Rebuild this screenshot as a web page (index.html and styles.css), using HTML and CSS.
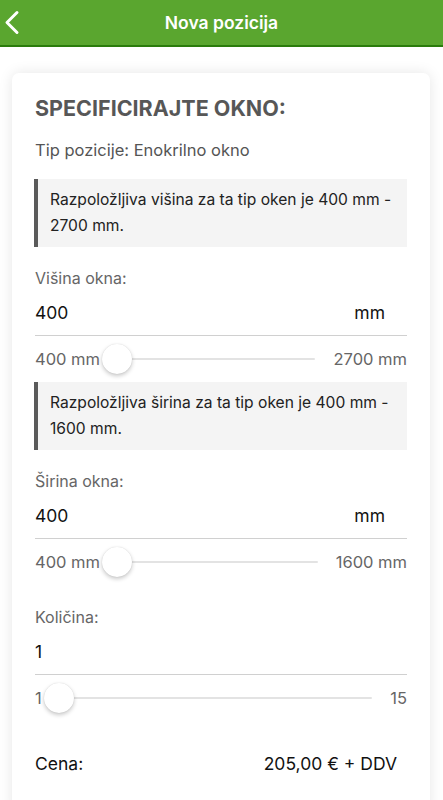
FILE: index.html
```html
<!DOCTYPE html>
<html lang="sl">
<head>
  <meta charset="UTF-8" />
  <title>Nova pozicija</title>
  <meta name="viewport" content="width=device-width, initial-scale=1.0" />
  <link rel="stylesheet" href="styles.css">
</head>
<body>
  <header class="topbar">
    <a class="back" href="#">
      <svg width="24" height="45" viewBox="0 0 24 45">
        <polyline points="17,12.5 7,22.5 17,32.5" fill="none" stroke="#fff" stroke-width="3" stroke-linecap="round" stroke-linejoin="round" />
      </svg>
    </a>
    <h1 class="title">Nova pozicija</h1>
  </header>

  <div class="card">
    <h2 class="card-title">SPECIFICIRAJTE OKNO:</h2>
    <p class="type">Tip pozicije: Enokrilno okno</p>

    <div class="note">Razpoložljiva višina za ta tip oken je 400 mm - 2700 mm.</div>

    <div class="field-label">Višina okna:</div>
    <div class="value-row">
      <span class="value">400</span>
      <span class="unit">mm</span>
    </div>
    <div class="slider-row">
      <span class="range-min">400 mm</span>
      <div class="slider"><div class="track"></div><div class="thumb" style="left: 0%"></div></div>
      <span class="range-max">2700 mm</span>
    </div>

    <div class="note">Razpoložljiva širina za ta tip oken je 400 mm - 1600 mm.</div>

    <div class="field-label">Širina okna:</div>
    <div class="value-row">
      <span class="value">400</span>
      <span class="unit">mm</span>
    </div>
    <div class="slider-row">
      <span class="range-min">400 mm</span>
      <div class="slider"><div class="track"></div><div class="thumb" style="left: 0%"></div></div>
      <span class="range-max">1600 mm</span>
    </div>

    <div class="field-label field-label-qty">Količina:</div>
    <div class="value-row">
      <span class="value">1</span>
    </div>
    <div class="slider-row">
      <span class="range-min">1</span>
      <div class="slider"><div class="track"></div><div class="thumb" style="left: 0%"></div></div>
      <span class="range-max">15</span>
    </div>

    <div class="price-row">
      <span>Cena:</span>
      <span class="price">205,00 € + DDV</span>
    </div>
  </div>
</body>
</html>
```

FILE: styles.css
```css
body {
  margin: 0;
  font-family: Inter, "Liberation Sans", sans-serif;
  background: #fff;
  color: #222;
}

.topbar {
  position: relative;
  height: 45px;
  background: #5aa62f;
  border-bottom: 2px solid #2b7c0c;
  display: flex;
  align-items: center;
  justify-content: center;
}

.back {
  position: absolute;
  left: 0;
  top: 0;
  height: 45px;
}

.title {
  margin: 0;
  font-size: 17.5px;
  font-weight: 600;
  color: #fff;
}

.card {
  margin: 26px 13px 0 12px;
  padding: 21px 23px 40px;
  background: #fff;
  border-radius: 7px;
  box-shadow: 0 0 14px rgba(0, 0, 0, 0.1);
}

.card-title {
  margin: 0;
  font-size: 21.5px;
  line-height: 28px;
  font-weight: 700;
  color: #575757;
}

.type {
  margin: 16px 0 0;
  font-size: 16.5px;
  line-height: 24px;
  color: #555;
}

.note {
  margin-top: 17px;
  margin-left: -1px;
  padding: 8px 12px 8px 12px;
  background: #f4f4f4;
  border-left: 4px solid #5a5a5a;
  font-size: 15.6px;
  line-height: 26px;
  color: #222;
}

.slider-row + .note {
  margin-top: 0;
}

.field-label {
  margin-top: 19px;
  font-size: 16px;
  line-height: 24px;
  color: #666;
}

.field-label-qty {
  margin-top: 20px;
}

.value-row {
  height: 45px;
  display: flex;
  align-items: center;
  justify-content: space-between;
  border-bottom: 1px solid #d0d0d0;
  font-size: 17.5px;
  color: #111;
}

.unit {
  margin-right: 22px;
}

.slider-row {
  height: 46px;
  display: flex;
  align-items: center;
  font-size: 16.5px;
  color: #666;
}

.range-min {
  margin-right: 2px;
}

.range-max {
  margin-left: 18px;
}

.slider {
  position: relative;
  flex: 1;
  height: 30px;
}

.track {
  position: absolute;
  left: 0;
  right: 0;
  top: 14px;
  height: 2px;
  background: #e3e3e3;
  border-radius: 1px;
}

.thumb {
  position: absolute;
  top: 0;
  width: 30px;
  height: 30px;
  border-radius: 50%;
  background: #fff;
  box-shadow: 0 2px 4px rgba(0, 0, 0, 0.22), 0 0 1px rgba(0, 0, 0, 0.15);
}

.price-row {
  margin-top: 31px;
  margin-right: 10px;
  display: flex;
  justify-content: space-between;
  font-size: 17.5px;
  line-height: 24px;
  color: #111;
}
```
